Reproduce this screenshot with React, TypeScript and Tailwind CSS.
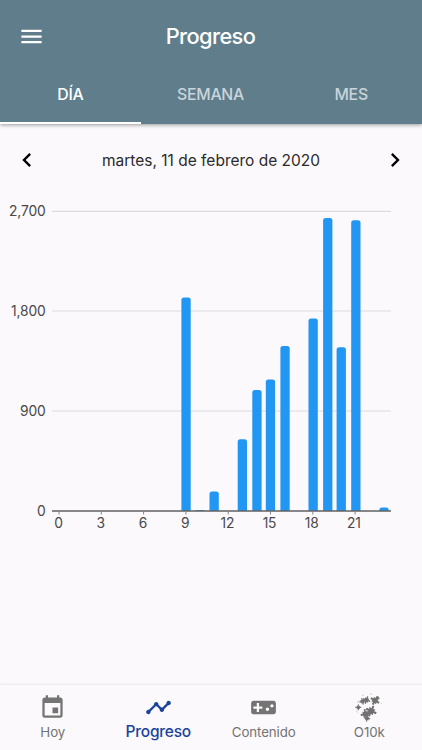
import type { ReactNode } from "react";
import { MdChevronLeft, MdChevronRight, MdEvent, MdMenu, MdTimeline, MdVideogameAsset } from "react-icons/md";

const TICKS = [0, 3, 6, 9, 12, 15, 18, 21];
const GRID = [
  { y: 11.3, label: "2,700" },
  { y: 111, label: "1,800" },
  { y: 211, label: "900" },
];
const BARS = [
  { x: 181.4, top: 97.4 },
  { x: 195.4, top: 310 },
  { x: 209.5, top: 291.4 },
  { x: 237.7, top: 239.3 },
  { x: 252.3, top: 190 },
  { x: 265.8, top: 179.4 },
  { x: 280.4, top: 146.1 },
  { x: 308.5, top: 118.4 },
  { x: 323.1, top: 18.1 },
  { x: 336.6, top: 147.3 },
  { x: 351.2, top: 20.2 },
  { x: 379.4, top: 307.5 },
];

function barPath(x: number, top: number) {
  const w = 9.3;
  const r = Math.min(2.5, 311 - top);
  return `M${x} 311V${top + r}q0-${r} ${r}-${r}h${w - 2 * r}q${r} 0 ${r} ${r}V311z`;
}

function Chart() {
  return (
    <svg width="422" height="340" viewBox="0 0 422 340" className="block font-['Inter',sans-serif] text-[13.8px] tracking-[-0.15px]">
      {GRID.map((g) => (
        <g key={g.label}>
          <path d={`M52 ${g.y}H391`} stroke="#dcdcdd" strokeWidth="1.2" />
          <text x="45.5" y={g.y + 5} textAnchor="end" fill="#484848">{g.label}</text>
        </g>
      ))}
      <text x="45.5" y="316" textAnchor="end" fill="#484848">0</text>
      {BARS.map((b) => (
        <path key={b.x} d={barPath(b.x, b.top)} fill="#2196f3" />
      ))}
      <path d="M52 311H391" stroke="#616161" strokeWidth="1.5" />
      {TICKS.map((t, i) => (
        <g key={t}>
          <path d={`M${59 + i * 42.3} 311v3.5`} stroke="#858585" strokeWidth="1" />
          <text x={58.5 + i * 42.2} y="327.6" textAnchor="middle" fill="#484848">{t}</text>
        </g>
      ))}
    </svg>
  );
}

function Piece({ x, y, s, a }: { x: number; y: number; s: number; a: number }) {
  return (
    <g transform={`translate(${x} ${y}) rotate(${a}) scale(${s})`}>
      <path d="M-1 -5Q0-6 1-5L.9-2.5 3-3 2.6-1 5-1.2Q6 0 5 1.2L2.6 1 3 3 .9 2.6 1.2 5Q0 6-1.2 5L-.9 2.6-3 3-2.6 1-5 1.2Q-6 0-5-1.2L-2.6-1-3-3-.9-2.5z" />
    </g>
  );
}

function PuzzleIcon() {
  return (
    <svg width="32" height="32" viewBox="0 0 32 32" fill="#707070" className="shrink-0">
      <Piece x={9.5} y={10.3} s={0.62} a={-15} />
      <Piece x={13.5} y={9} s={0.72} a={20} />
      <Piece x={22} y={9.5} s={0.9} a={30} />
      <Piece x={24.8} y={7} s={0.38} a={10} />
      <Piece x={5.3} y={16.3} s={0.55} a={0} />
      <Piece x={12.5} y={23} s={0.92} a={-12} />
      <Piece x={18.2} y={20} s={1.05} a={25} />
      <Piece x={14} y={27.3} s={0.6} a={10} />
      <path d="M4 12l1.6-3M9 4.8l2-.9M17 3.2l2-.4M28 13l1-1M3.5 19.5l1 2" stroke="#bbb" strokeWidth=".7" fill="none" />
    </svg>
  );
}

function NavItem({ icon, label, active = false }: { icon: ReactNode; label: string; active?: boolean }) {
  return (
    <button className={`flex flex-1 flex-col items-center ${active ? "text-[#1c439b]" : "text-[#747474]"}`}>
      <span className="flex h-8 items-center justify-center">{icon}</span>
      <span className={active ? "text-[15.5px] font-medium leading-[18px] tracking-[-0.2px]" : "text-[13.3px] leading-[18px] tracking-[-0.1px]"}>{label}</span>
    </button>
  );
}

export default function App() {
  return (
    <div className="flex h-[750px] w-[422px] flex-col overflow-hidden bg-[#fbf9fb] font-['Inter',sans-serif]">
      <header className="h-[123.5px] shrink-0 bg-[#607d8b] text-white shadow-[0_1px_4px_rgba(0,0,0,0.4)]">
        <div className="grid h-[72px] grid-cols-[64px_1fr_64px] items-center">
          <MdMenu size={27} className="ml-[18px]" />
          <h1 className="pr-px text-center text-[21.8px] font-medium leading-7 tracking-[-0.6px]">Progreso</h1>
        </div>
        <nav className="grid h-[51.5px] grid-cols-3 text-[15.8px] tracking-[-0.25px]">
          <button className="border-b-[2.5px] border-white pb-[3px] font-medium">DÍA</button>
          <button className="pb-[5.5px] pr-px font-medium text-[#cad5db]">SEMANA</button>
          <button className="pb-[5.5px] pr-px font-medium text-[#cad5db]">MES</button>
        </nav>
      </header>
      <div className="flex h-[76.5px] shrink-0 items-center justify-between px-[13px] pb-[3px] text-black">
        <MdChevronLeft size={28} />
        <span className="text-[15.5px] text-[#2b2b2b]">martes, 11 de febrero de 2020</span>
        <MdChevronRight size={28} />
      </div>
      <main className="flex-1">
        <Chart />
      </main>
      <footer className="flex h-[66px] shrink-0 border-t border-[#efedef] pt-[6px] shadow-[0_-1px_2px_rgba(0,0,0,0.03)]">
        <NavItem icon={<MdEvent size={27} />} label="Hoy" />
        <NavItem icon={<MdTimeline size={27} />} label="Progreso" active />
        <NavItem icon={<MdVideogameAsset size={27} />} label="Contenido" />
        <NavItem icon={<PuzzleIcon />} label="O10k" />
      </footer>
    </div>
  );
}
